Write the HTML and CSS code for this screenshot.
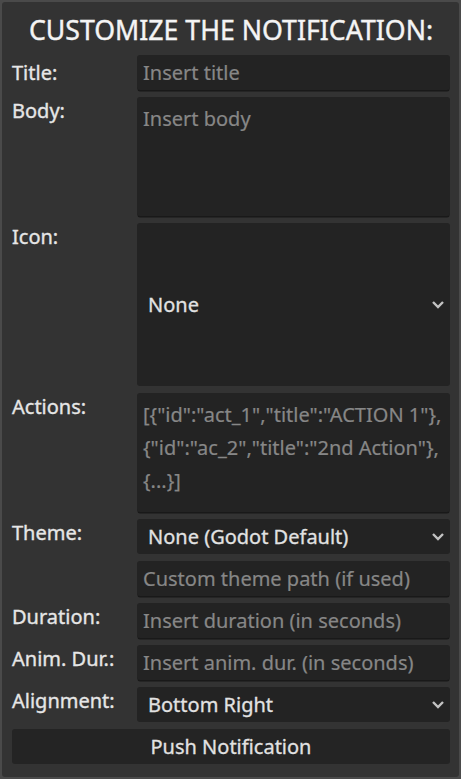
FILE: index.html
```html
<!DOCTYPE html>
<html lang="en">
<head>
<meta charset="utf-8">
<title>Customize the notification</title>
<link rel="stylesheet" href="styles.css">
</head>
<body>
<div class="panel">
  <h1 class="heading">CUSTOMIZE THE NOTIFICATION:</h1>
  <div class="form">
    <div class="label label-center">Title:</div>
    <div class="field line"><span class="ph">Insert title</span></div>

    <div class="label">Body:</div>
    <div class="field area area-body"><span class="ph">Insert body</span></div>

    <div class="label">Icon:</div>
    <div class="field select select-tall"><span class="val">None</span><svg class="chev" viewBox="0 0 14 9" width="14" height="9"><path d="M2 2 L7 7 L12 2" fill="none" stroke="#c2c2c2" stroke-width="2.4"/></svg></div>

    <div class="label">Actions:</div>
    <div class="field area area-actions"><span class="ph">[{"id":"act_1","title":"ACTION 1"},<br>{"id":"ac_2","title":"2nd Action"},<br>{...}]</span></div>

    <div class="label">Theme:</div>
    <div class="field select"><span class="val">None (Godot Default)</span><svg class="chev" viewBox="0 0 14 9" width="14" height="9"><path d="M2 2 L7 7 L12 2" fill="none" stroke="#c2c2c2" stroke-width="2.4"/></svg></div>

    <div class="label"></div>
    <div class="field line"><span class="ph">Custom theme path (if used)</span></div>

    <div class="label">Duration:</div>
    <div class="field line"><span class="ph">Insert duration (in seconds)</span></div>

    <div class="label">Anim. Dur.:</div>
    <div class="field line"><span class="ph">Insert anim. dur. (in seconds)</span></div>

    <div class="label">Alignment:</div>
    <div class="field select"><span class="val">Bottom Right</span><svg class="chev" viewBox="0 0 14 9" width="14" height="9"><path d="M2 2 L7 7 L12 2" fill="none" stroke="#c2c2c2" stroke-width="2.4"/></svg></div>

    <button class="push">Push Notification</button>
  </div>
</div>
</body>
</html>
```
FILE: styles.css
```css
html, body {
  margin: 0;
  padding: 0;
  height: 100%;
}
body {
  background: #4a4a4a;
  font-family: "Noto Sans", "Open Sans", sans-serif;
  color: #dfdfdf;
  padding: 2px;
  box-sizing: border-box;
}
.panel {
  background: #333333;
  border-radius: 3px;
  height: 100%;
  box-sizing: border-box;
  padding: 10px 9px 10px 10px;
}
.heading {
  margin: 0 0 7px;
  font-size: 26.7px;
  font-weight: 400;
  line-height: 36px;
  height: 36px;
  text-align: center;
  color: #f4f4f4;
  -webkit-text-stroke: 0.4px #f4f4f4;
}
.form {
  display: grid;
  grid-template-columns: 125px 1fr;
  row-gap: 7px;
}
.label {
  font-size: 20px;
  line-height: 27px;
  color: #e6e6e6;
  white-space: nowrap;
  -webkit-text-stroke: 0.35px #e6e6e6;
}
.label-center {
  align-self: center;
}
.field {
  background: #232323;
  border-radius: 3px;
  font-size: 20px;
  box-sizing: border-box;
}
.line {
  height: 35px;
  line-height: 35px;
  padding: 0 6px;
  box-shadow: 0 2px 0 -0.5px #191919;
}
.area {
  padding: 5px 6px;
  line-height: 33px;
  box-shadow: 0 2px 0 -0.5px #191919;
}
.area-body {
  height: 119px;
}
.area-actions {
  height: 119px;
}
.ph {
  color: #878787;
  -webkit-text-stroke: 0.2px #878787;
}
.select {
  height: 35px;
  display: flex;
  align-items: center;
  justify-content: space-between;
  padding: 0 5px 0 11px;
}
.select-tall {
  height: 163px;
}
.val {
  color: #e2e2e2;
  -webkit-text-stroke: 0.3px #e2e2e2;
}
.chev {
  display: block;
}
.push {
  grid-column: 1 / 3;
  height: 35px;
  background: #242424;
  border: none;
  border-radius: 3px;
  color: #e2e2e2;
  -webkit-text-stroke: 0.3px #e2e2e2;
  font-family: "Noto Sans", "Open Sans", sans-serif;
  font-size: 20px;
  line-height: 35px;
  padding: 0;
  text-align: center;
}
```
